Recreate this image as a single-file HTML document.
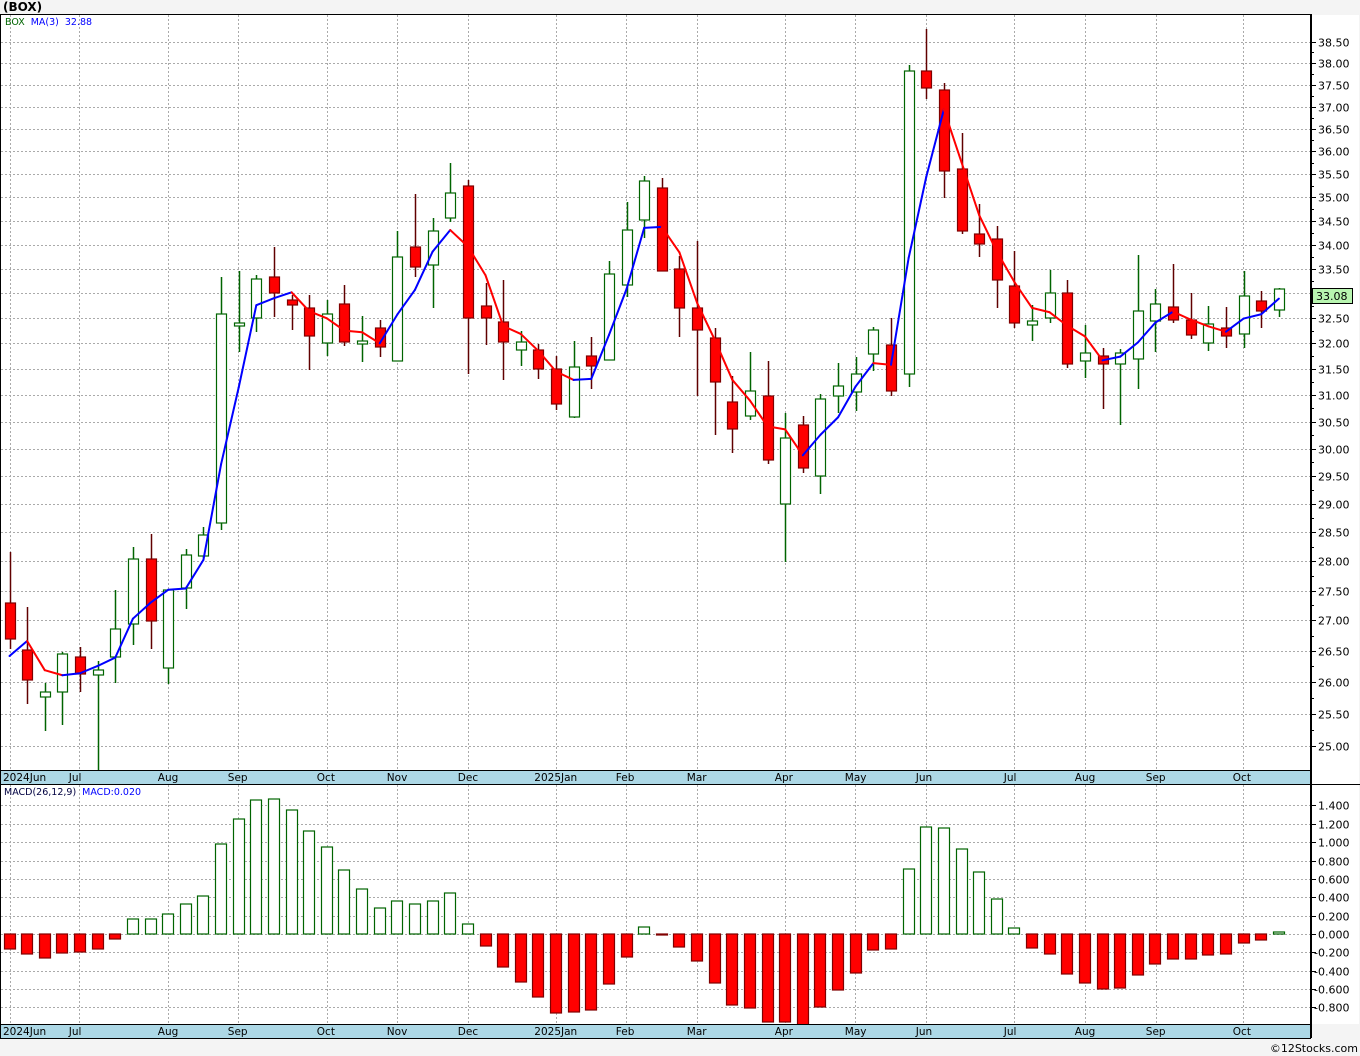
<!DOCTYPE html>
<html><head><meta charset="utf-8"><style>
html,body{margin:0;padding:0;background:#f4f4f4;width:1360px;height:1056px;overflow:hidden}
svg{display:block}
text{font-family:"DejaVu Sans","Liberation Sans",sans-serif}
</style></head><body>
<svg id="s" width="1360" height="1056" xmlns="http://www.w3.org/2000/svg"></svg>
<script>
var C=[
[603,639,552,649,'r'],[650,680,607,704,'r'],[692,697,683,731,'g'],[654,692,652,725,'g'],[657,674,647,692,'r'],
[670,675,661,770,'g'],[629,657,590,683,'g'],[559,624,547,645,'g'],[559,621,534,649,'r'],[590,668,590,684,'g'],
[555,588,549,609,'g'],[535,556,527,558,'g'],[314,523,277,530,'g'],[323,326,271,352,'g'],[279,318,275,332,'g'],
[277,293,247,317,'r'],[300,305,295,330,'r'],[308,336,295,370,'r'],[314,343,300,356,'g'],[304,342,285,346,'r'],
[341,344,316,362,'g'],[328,347,320,357,'r'],[257,361,231,361,'g'],[247,267,194,277,'r'],[231,265,218,308,'g'],
[193,218,163,222,'g'],[186,318,180,374,'r'],[306,318,283,345,'r'],[322,342,280,380,'r'],[342,350,331,366,'g'],
[350,369,344,379,'r'],[369,404,356,410,'r'],[367,417,341,418,'g'],[356,366,337,389,'r'],[274,360,261,360,'g'],
[230,285,202,297,'g'],[181,220,176,238,'g'],[188,271,178,271,'r'],[269,308,256,337,'r'],[308,330,241,396,'r'],
[338,382,328,435,'r'],[402,429,376,453,'r'],[391,416,352,420,'g'],[396,460,361,464,'r'],[438,504,413,562,'g'],
[425,468,416,473,'r'],[399,476,394,494,'g'],[386,396,363,413,'g'],[374,392,357,411,'g'],[330,354,327,371,'g'],
[345,391,318,396,'r'],[71,374,65,387,'g'],[71,88,29,99,'r'],[90,171,83,198,'r'],[169,231,133,234,'r'],
[234,244,204,257,'r'],[239,280,226,308,'r'],[286,323,251,328,'r'],[321,325,305,341,'g'],[293,318,270,323,'g'],
[293,364,280,368,'r'],[353,361,325,378,'g'],[356,364,348,409,'r'],[353,364,349,425,'g'],[311,359,255,389,'g'],
[304,321,289,352,'g'],[307,320,264,323,'r'],[320,335,293,339,'r'],[324,343,306,351,'g'],[328,336,307,348,'r'],
[296,334,271,348,'g'],[301,311,291,328,'r'],[289,310,288,317,'g']];
var M=[949,954,958,953,952,949,939,919,919,914,904,896,844,819,800,799,810,831,847,870,889,908,901,904,901,893,924,946,967,982,997,1013,1012,1010,984,957,927,934,947,961,983,1005,1008,1022,1022,1025,1007,990,973,950,949,869,827,828,849,872,899,928,948,954,974,983,989,988,975,964,959,959,955,954,943,940,932];
var h='';
function X(i){return 9.5+17.63*i}
function Y(p){return 5995.3-1630.8*Math.log(p)}
function P(y){return Math.exp((5995.3-y)/1630.8)}
h+='<rect x="0" y="0" width="1360" height="1056" fill="#f4f4f4"/>';
h+='<text x="3" y="11" font-size="12" font-weight="bold" fill="#000">(BOX)</text>';
h+='<rect x="0.5" y="14.5" width="1310" height="1024" fill="#fff" stroke="#000"/>';
var months=[[10,'2024Jun'],[79,'Jul'],[168,'Aug'],[238,'Sep'],[327,'Oct'],[397,'Nov'],[468,'Dec'],[556,'2025Jan'],[626,'Feb'],[697,'Mar'],[785,'Apr'],[855,'May'],[926,'Jun'],[1014,'Jul'],[1085,'Aug'],[1156,'Sep'],[1243,'Oct']];
for(var p=25;p<=38.51;p+=0.5){var y=Math.round(Y(p))+0.5;h+='<line x1="1" x2="1310" y1="'+y+'" y2="'+y+'" stroke="#aaa" stroke-dasharray="2,2"/>';}
months.forEach(function(m){h+='<line x1="'+(m[0]+0.5)+'" x2="'+(m[0]+0.5)+'" y1="15" y2="770" stroke="#aaa" stroke-dasharray="2,2"/>';h+='<line x1="'+(m[0]+0.5)+'" x2="'+(m[0]+0.5)+'" y1="785" y2="1024" stroke="#aaa" stroke-dasharray="2,2"/>';});
for(var v=-0.8;v<=1.41;v+=0.2){var y=Math.round(934-v*91.8)+0.5;h+='<line x1="1" x2="1310" y1="'+y+'" y2="'+y+'" stroke="#aaa" stroke-dasharray="2,2"/>';}
C.forEach(function(c,i){var x=X(i),xr=Math.round(x)+0.5;var col=c[4]=='g'?'#006400':'#600000';
h+='<line x1="'+xr+'" x2="'+xr+'" y1="'+c[2]+'" y2="'+c[3]+'" stroke="'+col+'" stroke-width="1.5"/>';
h+='<rect x="'+(Math.round(x)-4.5)+'" y="'+c[0]+'" width="10" height="'+Math.max(2,c[1]-c[0])+'" fill="'+(c[4]=='g'?'#fff':'#f00')+'" stroke="'+(c[4]=='g'?'#006400':'#800000')+'" stroke-width="1.2"/>';});
var cl=C.map(function(c){return P(c[4]=='g'?c[0]:c[1])});var ma=[];
for(var i=0;i<C.length;i++){var a=Math.max(0,i-2),s=0;for(var j=a;j<=i;j++)s+=cl[j];ma.push(Y(s/(i-a+1)));}
ma[0]=656;ma[1]=641;
for(var i=1;i<ma.length;i++){var col=ma[i]<ma[i-1]?'#0000ff':'#ff0000';h+='<line x1="'+X(i-1)+'" y1="'+ma[i-1]+'" x2="'+X(i)+'" y2="'+ma[i]+'" stroke="'+col+'" stroke-width="2" stroke-linecap="round"/>';}
M.forEach(function(y,i){var x=Math.round(X(i))-5.5;var g=y<934;
h+='<rect x="'+x+'" y="'+(g?y:934)+'" width="11" height="'+Math.max(1,Math.abs(934-y))+'" fill="'+(g?'#fff':'#f00')+'" stroke="'+(g?'#006400':'#800000')+'" stroke-width="1.2"/>';});
h+='<text x="5" y="25" font-size="9.5"><tspan fill="#006400">BOX</tspan><tspan fill="#0000ff" dx="6">MA(3)</tspan><tspan fill="#0000ff" dx="6">32.88</tspan></text>';
h+='<text x="4" y="795" font-size="9.5"><tspan fill="#000040">MACD(26,12,9)</tspan><tspan fill="#0000ff" dx="6">MACD:0.020</tspan></text>';
h+='<rect x="0.5" y="770.5" width="1310" height="14" fill="#add8e6" stroke="#000"/>';
h+='<rect x="0.5" y="1024.5" width="1310" height="14" fill="#add8e6" stroke="#000"/>';
months.forEach(function(m){var lx=m[0]-(m[1].length>4?m[1].length*3.1:m[1].length*3.4);if(m[1]=='2024Jun')lx=3;
h+='<text x="'+lx+'" y="781" font-size="10.5" fill="#000">'+m[1]+'</text><text x="'+lx+'" y="1035" font-size="10.5" fill="#000">'+m[1]+'</text>';});
h+='<rect x="1311" y="15" width="48" height="1009" fill="#fff"/>';
h+='<line x1="1311.5" x2="1311.5" y1="14" y2="1038" stroke="#000"/>';
h+='<line x1="1311" x2="1360" y1="784.5" y2="784.5" stroke="#000"/>';
for(var p=25;p<=38.51;p+=0.5){var y=Math.round(Y(p))+0.5;h+='<line x1="1311" x2="1316" y1="'+y+'" y2="'+y+'" stroke="#000"/>';
 h+='<text x="1318" y="'+(y+4)+'" font-size="11" fill="#000">'+p.toFixed(2)+'</text>';
 var y2=Math.round(Y(p+0.25))+0.5;if(p<38.5)h+='<line x1="1311" x2="1314" y1="'+y2+'" y2="'+y2+'" stroke="#000"/>';}
for(var k=-4;k<=7;k++){var v=k*0.2;var y=Math.round(934-v*91.8)+0.5;h+='<line x1="1311" x2="1316" y1="'+y+'" y2="'+y+'" stroke="#000"/>';
 h+='<text x="'+(v<0?1314:1318)+'" y="'+(y+4)+'" font-size="11" fill="#000">'+(v<0?'-':'')+Math.abs(v).toFixed(3)+'</text>';}
h+='<rect x="1312.5" y="288.5" width="40" height="15" fill="#b8f5b0" stroke="#000"/><text x="1316" y="300" font-size="11" fill="#000">33.08</text>';
h+='<text x="1358" y="1052" font-size="11" fill="#000" text-anchor="end">©12Stocks.com</text>';
document.getElementById('s').innerHTML=h;
</script>
</body></html>
